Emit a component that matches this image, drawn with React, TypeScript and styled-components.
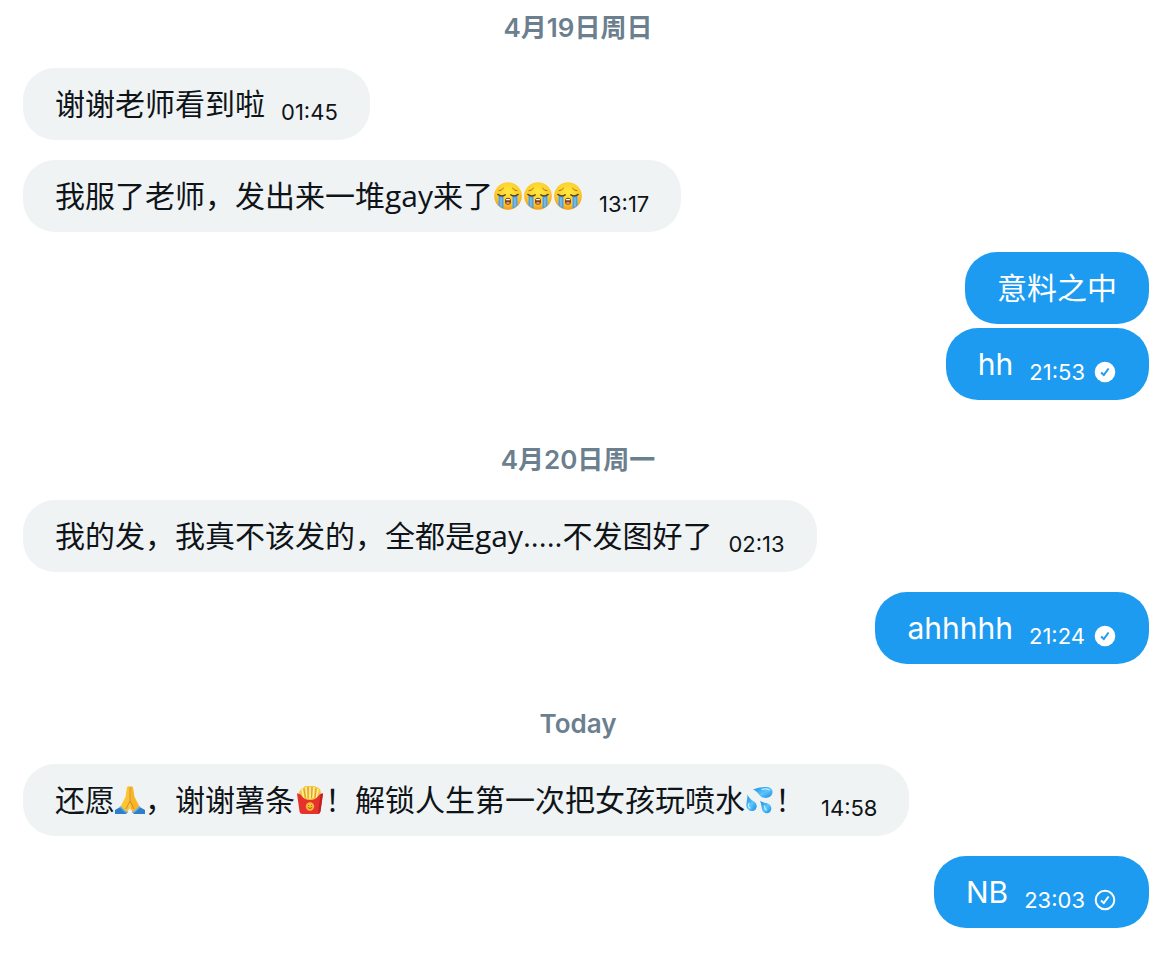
import React from "react";
import styled, { createGlobalStyle } from "styled-components";

const GlobalStyle = createGlobalStyle`
  *, *::before, *::after { box-sizing: border-box; }
  body {
    margin: 0;
    background: #ffffff;
    color: #0f1419;
    font-family: Inter, "Noto Sans CJK SC", sans-serif;
  }
`;

const Conversation = styled.main`
  display: flex;
  flex-direction: column;
  gap: 40px;
  padding: 8px 13px 40px 23px;
`;

const Day = styled.section`
  display: flex;
  flex-direction: column;
  gap: 20px;
`;

const DayLabel = styled.h2`
  margin: 0;
  padding-right: 16px;
  text-align: center;
  color: #6b7f8e;
  font-size: 26px;
  font-weight: 600;
  line-height: 40px;
`;

const Group = styled.div<{ $own?: boolean }>`
  display: flex;
  flex-direction: column;
  align-items: ${(p) => (p.$own ? "flex-end" : "flex-start")};
  gap: 4px;
`;

const Message = styled.p`
  margin: 0;
  font-size: 30px;
  line-height: 40px;
`;

const Bubble = styled.article<{ $own?: boolean }>`
  display: flex;
  align-items: flex-end;
  gap: 16px;
  max-width: 100%;
  padding: 16px 32px;
  border-radius: 32px;
  background: ${(p) => (p.$own ? "#1d9bf0" : "#eff3f4")};
  color: ${(p) => (p.$own ? "#ffffff" : "#0f1419")};

  ${Message} {
    font-family: ${(p) => (p.$own ? "Inter" : '"Open Sans"')}, "Noto Sans CJK SC", sans-serif;
  }
`;

const Meta = styled.span`
  display: flex;
  align-items: center;
  gap: 8px;
  font-size: 22px;
  line-height: 24px;
`;

const EmojiSvg = styled.svg`
  width: 30px;
  height: 30px;
  vertical-align: -4px;
`;

const StatusSvg = styled.svg`
  width: 24px;
  height: 24px;
`;

const Sob = () => (
  <EmojiSvg viewBox="0 0 30 30" role="img" aria-label="loudly crying face">
    <defs>
      <radialGradient id="sobFace" cx="50%" cy="35%" r="65%">
        <stop offset="0" stopColor="#ffe83c" />
        <stop offset="0.65" stopColor="#fdcd2c" />
        <stop offset="1" stopColor="#ee9a1c" />
      </radialGradient>
    </defs>
    <circle cx="15" cy="15" r="13.800" fill="url(#sobFace)" />
    <path d="M5.500 14.500h5v13Q8 26.500 5.500 24.500zM19.500 14.500h5v10q-2.300 2-5 3z" fill="#4e9fe3" />
    <path d="M8 16.500v9M22 16.500v9" stroke="#7fc2f3" strokeWidth="1.400" />
    <path d="M4.800 13.400q3.700 2.800 7.400.4M17.800 13.800q3.700 2.400 7.400-.4" fill="none" stroke="#5d4215" strokeWidth="1.400" strokeLinecap="round" />
    <path d="M6 9.800q3-.4 4.500-2.600M24 9.800q-3-.4-4.500-2.600" fill="none" stroke="#a86b14" strokeWidth="1" strokeLinecap="round" />
    <ellipse cx="15" cy="20.300" rx="3" ry="3.500" fill="#7b3a12" />
    <path d="M13 18.200q2-1 4 0v1h-4z" fill="#fff" />
    <ellipse cx="15" cy="22" rx="1.800" ry="1.200" fill="#ea8a68" />
  </EmojiSvg>
);

const Pray = () => (
  <EmojiSvg viewBox="0 0 30 30" role="img" aria-label="folded hands">
    <path d="M0 25l7-4 6 6-2 2H0zM30 25l-7-4-6 6 2 2h11z" fill="#2f7fc8" />
    <path d="M14.800 1.500c-1.800-.8-2.800.2-3 2L10.500 12 5.500 21.500l6 6 3.300-4z" fill="#fcc433" />
    <path d="M15.200 1.500c1.800-.8 2.800.2 3 2l1.300 8.500 5 9.500-6 6-3.300-4z" fill="#f8b627" />
    <path d="M15 2v14l-4 8M15 16l4 8" fill="none" stroke="#d88914" strokeWidth="1" />
    <path d="M5 21.500l6.500 6M25 21.500l-6.500 6" stroke="#68b3ec" strokeWidth="1.600" />
  </EmojiSvg>
);

const Fries = () => (
  <EmojiSvg viewBox="0 0 30 30" role="img" aria-label="french fries">
    <path d="M4 7l2-3 2-1 2-2h9l3 1 3 2 1 4-2 8H5z" fill="#f5c640" />
    <path d="M7 4l2 10M11 2l1 11M15 2v12M19 2l-1 11M23 4l-2 10" stroke="#fff0a0" strokeWidth="1.500" />
    <path d="M9 4l1.500 9M13 2v11M17 2l-.5 11M21 4l-1 9" stroke="#d38c20" strokeWidth=".7" />
    <path d="M2 8.500q2.500-.5 4 1.500Q9 15 15 15t9-5q1.500-2 4-1.500L25.500 26.500q-.3 2.500-3 2.500h-15q-2.700 0-3-2.500z" fill="#e5322d" />
    <path d="M25.500 9.500L23 28.800q2-.2 2.400-2.300L28 8.500q-1.500 0-2.500 1z" fill="#bf2020" />
    <circle cx="15" cy="21.500" r="4.200" fill="#f7bd32" />
    <path d="M12.800 22.500q2.200 2 4.400 0M13.500 20v.8M16.500 20v.8" fill="none" stroke="#b3411b" strokeWidth=".9" />
  </EmojiSvg>
);

const Splash = () => (
  <EmojiSvg viewBox="0 0 30 30" role="img" aria-label="sweat droplets">
    <defs>
      <linearGradient id="drop" x1="0" y1="0" x2="1" y2="1">
        <stop offset="0" stopColor="#188ee0" />
        <stop offset="0.55" stopColor="#5cc5fb" />
        <stop offset="1" stopColor="#1688dc" />
      </linearGradient>
    </defs>
    <path d="M8 4.500Q14 1.800 20 2c5-.2 8 2 7.500 5.500-.6 4-5 6.500-9.500 5C14 11.300 13 6.500 8 4.500z" fill="url(#drop)" />
    <path d="M2.500 9.500q1.500 4 6.500 7c3 2 3.500 5.500 1.500 8-2.300 2.500-6 2-8-.8C0 20.500 2.500 16 2.500 9.500z" fill="url(#drop)" />
    <path d="M15 16q3 1.500 7 2.300c3 .5 4.500 3.200 4.300 5.700-.3 3.300-3.300 5-6.300 4C15.500 26.500 17.500 20.500 15 16z" fill="url(#drop)" />
    <path d="M17 4.500q4-1.500 7 .3M4 18.500q-1.500 3 1 4.500M19.500 21q0 3 2 4" fill="none" stroke="#c3edff" strokeWidth="1.300" strokeLinecap="round" />
  </EmojiSvg>
);

const Status = ({ seen }: { seen?: boolean }) => (
  <StatusSvg viewBox="0 0 24 24" role="img" aria-label={seen ? "Seen" : "Sent"}>
    <circle cx="12" cy="12" r={seen ? 10.300 : 9.300} fill={seen ? "#fff" : "none"} stroke={seen ? "none" : "#fff"} strokeWidth="2" />
    <path d="M8.100 12.500l2.700 2.600 4.800-6.600" fill="none" stroke={seen ? "#1d9bf0" : "#fff"} strokeWidth="2" />
  </StatusSvg>
);

export default function App() {
  return (
    <>
      <GlobalStyle />
      <Conversation>
        <Day>
          <DayLabel>4月19日周日</DayLabel>
          <Group>
            <Bubble><Message>谢谢老师看到啦</Message><Meta><time>01:45</time></Meta></Bubble>
          </Group>
          <Group>
            <Bubble><Message>我服了老师，发出来一堆gay来了<Sob /><Sob /><Sob /></Message><Meta><time>13:17</time></Meta></Bubble>
          </Group>
          <Group $own>
            <Bubble $own><Message>意料之中</Message></Bubble>
            <Bubble $own><Message>hh</Message><Meta><time>21:53</time><Status seen /></Meta></Bubble>
          </Group>
        </Day>
        <Day>
          <DayLabel>4月20日周一</DayLabel>
          <Group>
            <Bubble><Message>我的发，我真不该发的，全都是gay.....不发图好了</Message><Meta><time>02:13</time></Meta></Bubble>
          </Group>
          <Group $own>
            <Bubble $own><Message>ahhhhh</Message><Meta><time>21:24</time><Status seen /></Meta></Bubble>
          </Group>
        </Day>
        <Day>
          <DayLabel>Today</DayLabel>
          <Group>
            <Bubble><Message>还愿<Pray />，谢谢薯条<Fries />！解锁人生第一次把女孩玩喷水<Splash />！</Message><Meta><time>14:58</time></Meta></Bubble>
          </Group>
          <Group $own>
            <Bubble $own><Message>NB</Message><Meta><time>23:03</time><Status /></Meta></Bubble>
          </Group>
        </Day>
      </Conversation>
    </>
  );
}
